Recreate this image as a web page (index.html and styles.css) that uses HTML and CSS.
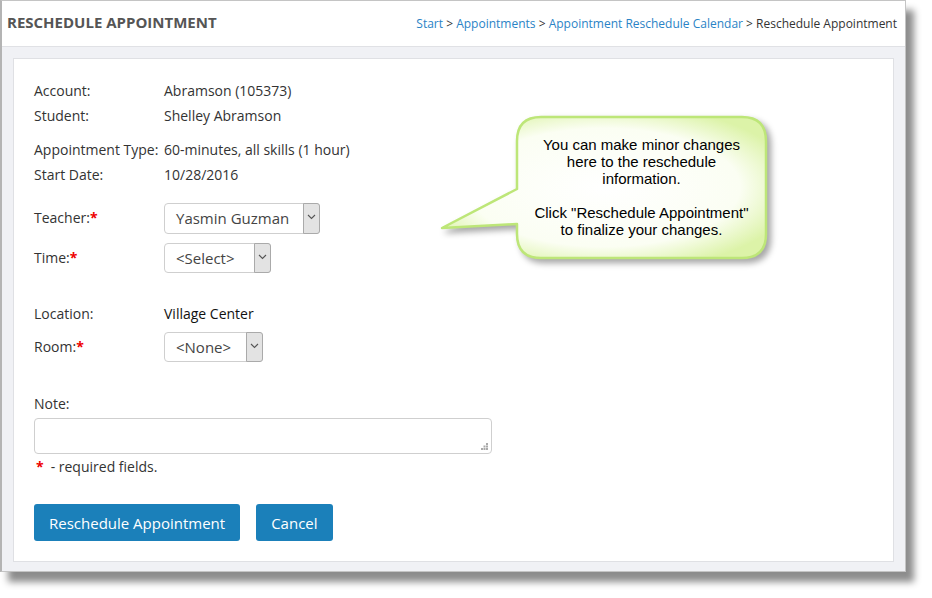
FILE: index.html
```html
<!DOCTYPE html>
<html lang="en">
<head>
    <meta charset="UTF-8">
    <meta name="viewport" content="width=device-width, initial-scale=1.0">
    <title>Reschedule Appointment</title>
    <link rel="stylesheet" href="styles.css">
</head>
<body>
    <div class="window">
        <div class="head">
            <h1>RESCHEDULE APPOINTMENT</h1>
            <div class="crumbs">
                <a href="#">Start</a> &gt; <a href="#">Appointments</a> &gt; <a href="#">Appointment Reschedule Calendar</a> &gt; Reschedule Appointment
            </div>
        </div>
        <div class="main">
            <div class="card">
                <div class="row"><span class="lbl">Account:</span><span>Abramson (105373)</span></div>
                <div class="row"><span class="lbl">Student:</span><span>Shelley Abramson</span></div>
                <div class="row gap-s"><span class="lbl">Appointment Type:</span><span>60-minutes, all skills (1 hour)</span></div>
                <div class="row"><span class="lbl">Start Date:</span><span>10/28/2016</span></div>

                <div class="row field teacher">
                    <span class="lbl">Teacher:<b class="req">*</b></span>
                    <div class="sel"><span class="val">Yasmin Guzman</span><span class="arr"><svg width="9" height="6" viewBox="0 0 9 6"><path d="M1 1l3.5 3.5L8 1" fill="none" stroke="#555" stroke-width="1.1"/></svg></span></div>
                </div>
                <div class="row field time">
                    <span class="lbl">Time:<b class="req">*</b></span>
                    <div class="sel"><span class="val w-sel">&lt;Select&gt;</span><span class="arr"><svg width="9" height="6" viewBox="0 0 9 6"><path d="M1 1l3.5 3.5L8 1" fill="none" stroke="#555" stroke-width="1.1"/></svg></span></div>
                </div>

                <div class="row location"><span class="lbl">Location:</span><span class="dark">Village Center</span></div>
                <div class="row field room">
                    <span class="lbl">Room:<b class="req">*</b></span>
                    <div class="sel"><span class="val w-none">&lt;None&gt;</span><span class="arr"><svg width="9" height="6" viewBox="0 0 9 6"><path d="M1 1l3.5 3.5L8 1" fill="none" stroke="#555" stroke-width="1.1"/></svg></span></div>
                </div>

                <div class="row note-lbl">Note:</div>
                <div class="note-wrap">
                    <textarea class="note"></textarea>
                    <svg class="grip" width="7" height="7" viewBox="0 0 7 7">
                        <g fill="#aaa">
                            <rect x="5" y="0" width="2" height="2"/>
                            <rect x="2.5" y="2.5" width="2" height="2"/>
                            <rect x="5" y="2.5" width="2" height="2"/>
                            <rect x="0" y="5" width="2" height="2"/>
                            <rect x="2.5" y="5" width="2" height="2"/>
                            <rect x="5" y="5" width="2" height="2"/>
                        </g>
                    </svg>
                </div>
                <div class="row required"><b class="req">*</b>- required fields.</div>

                <div class="actions">
                    <button class="btn">Reschedule Appointment</button>
                    <button class="btn">Cancel</button>
                </div>
            </div>
        </div>

        <div class="callout">
            <svg class="bubble" width="360" height="170" viewBox="0 0 360 170">
                <defs>
                    <radialGradient id="fill" cx="50%" cy="50%" r="60%">
                        <stop offset="0" stop-color="#ffffff"/>
                        <stop offset="0.7" stop-color="#fbfef3"/>
                        <stop offset="1" stop-color="#dcf3a8"/>
                    </radialGradient>
                </defs>
                <path d="M111 12H312Q336 12 336 36V129Q336 153 312 153H111Q87 153 87 129V119L12 123L87 84V36Q87 12 111 12Z" fill="url(#fill)" stroke="#bde678" stroke-width="2.5" stroke-linejoin="round"/>
            </svg>
            <div class="callout-text">You can make minor changes<br>here to the reschedule<br>information.<br><br>Click "Reschedule Appointment"<br>to finalize your changes.</div>
        </div>
    </div>
</body>
</html>
```

FILE: styles.css
```css
* { margin: 0; padding: 0; box-sizing: border-box; }
body {
    background: #fff;
    font-family: "Open Sans", "Noto Sans", sans-serif;
    font-size: 14px;
    color: #333;
    padding-bottom: 30px;
}
.window {
    position: relative;
    width: 906px;
    height: 572px;
    border: 1px solid #c4c4c4;
    border-left: 2px solid #b4b4b4;
    background: #f0f1f5;
    box-shadow: 8px 10px 7px rgba(0,0,0,0.45);
}
.head {
    height: 46px;
    background: #fff;
    border-bottom: 1px solid #e0e1e5;
    display: flex;
    align-items: center;
    justify-content: space-between;
    padding: 0 8px 0 5px;
}
.head h1 {
    font-size: 15px;
    font-weight: 700;
    color: #555;
    margin-top: -4px;
}
.crumbs {
    font-size: 12px;
    color: #333;
}
.crumbs a {
    color: #2a83c6;
    text-decoration: none;
}
.main {
    padding: 11px 11px 10px 11px;
}
.card {
    background: #fff;
    border: 1px solid #dfe0e4;
    height: 504px;
    padding: 19px 20px 0 20px;
    display: flex;
    flex-direction: column;
    align-items: flex-start;
}
.row {
    display: flex;
    align-items: center;
    line-height: 25px;
}
.lbl {
    width: 130px;
    flex-shrink: 0;
}
.gap-s { margin-top: 9px; }
.req {
    color: #e00;
    font-weight: 700;
}
.field .lbl { align-self: flex-start; line-height: 25px; }
.teacher { margin-top: 16px; }
.teacher .lbl { margin-top: 2px; }
.time { margin-top: 9px; }
.time .lbl { margin-top: 2px; }
.location { margin-top: 28px; }
.room { margin-top: 6px; }
.room .lbl { margin-top: 2px; }
.dark { color: #111; }
.sel {
    display: flex;
    align-items: stretch;
    height: 30px;
    border: 1px solid #cfcfcf;
    border-radius: 4px;
    background: #fff;
    font-size: 15px;
    color: #444;
}
.teacher .sel { height: 31px; }
.val {
    padding: 0 0 0 11px;
    line-height: 28px;
    width: 138px;
}
.val.w-sel { width: 89px; }
.val.w-none { width: 81px; }
.arr {
    width: 17px;
    background: #e3e3e3;
    border: 1px solid #aaa;
    border-radius: 0 3px 3px 0;
    margin: -1px -1px -1px 0;
    display: flex;
    align-items: center;
    justify-content: center;
}
.arr svg { margin-top: -3px; }
.note-lbl { margin-top: 29px; }
.note-wrap {
    position: relative;
    margin-top: 2px;
}
.note {
    display: block;
    width: 458px;
    height: 36px;
    border: 1px solid #cfcfcf;
    border-radius: 4px;
    font-family: inherit;
    font-size: 14px;
    resize: none;
}
.grip {
    position: absolute;
    right: 4px;
    bottom: 4px;
}
.required {
    padding-left: 2px;
}
.required .req {
    margin-right: 7px;
}
.actions {
    display: flex;
    gap: 16px;
    margin-top: 25px;
}
.btn {
    height: 37px;
    padding: 0 15px;
    border: 0;
    border-radius: 3px;
    background: #1b80ba;
    color: #fff;
    font-family: inherit;
    font-size: 15px;
    cursor: pointer;
}
.callout {
    position: absolute;
    left: 428px;
    top: 104px;
    width: 360px;
    height: 170px;
}
.bubble {
    display: block;
    filter: drop-shadow(4px 4px 3px rgba(0,0,0,0.35));
}
.callout-text {
    position: absolute;
    left: 87px;
    top: 31px;
    width: 249px;
    text-align: center;
    font-family: "Liberation Sans", Arial, sans-serif;
    font-size: 15px;
    line-height: 17px;
    color: #000;
}
```
